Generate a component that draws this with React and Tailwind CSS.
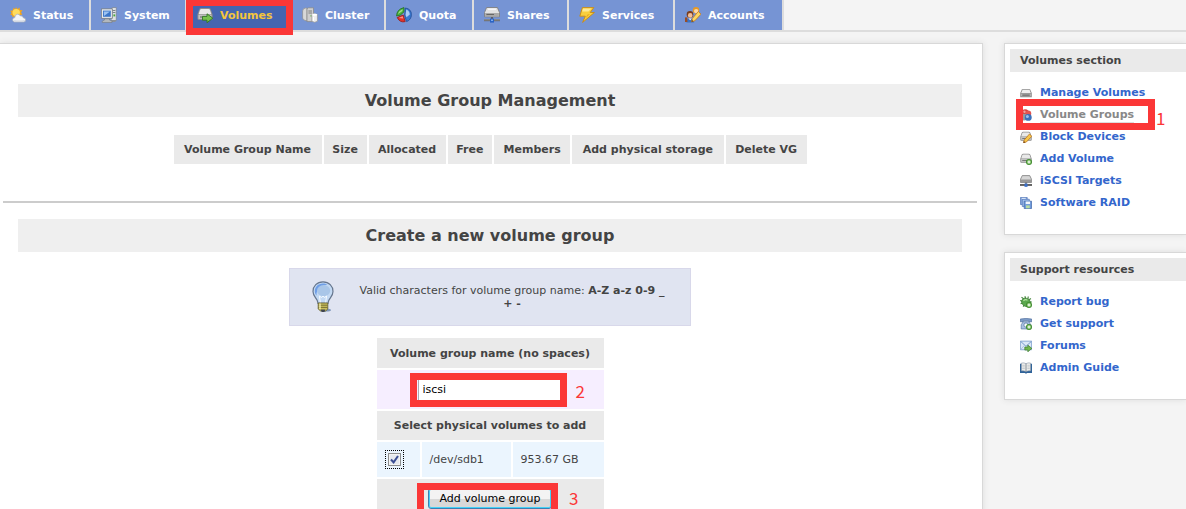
import { useState } from 'react';
import clsx from 'clsx';

const Svg = ({ size = 16, children }) => (
    <svg width={size} height={size} viewBox="0 0 16 16" className="shrink-0" aria-hidden="true">
        {children}
    </svg>
);

// Grey disk body shared by most of the volume icons
const Disk = () => (
    <>
        <path d="M2 3 Q2.3 1 4 1 H12 Q13.7 1 14 3 L15.6 7.6 V11.6 Q15.6 13 14.4 13 H1.6 Q.4 13 .4 11.6 V7.6 Z" fill="#8c8c8c" />
        <path d="M2.9 3.2 Q3.2 2 4.4 2 H11.6 Q12.8 2 13.1 3.2 L14.4 7.2 H1.6 Z" fill="#e9e9e9" />
        <path d="M1.4 8 H14.6 V11.4 Q14.6 12 14 12 H2 Q1.4 12 1.4 11.4 Z" fill="#c2c2c2" />
        <path d="M3 9.4 H10 V10.6 H3 Z" fill="#707070" />
    </>
);

const PlusBadge = () => (
    <>
        <circle cx="12" cy="12" r="4" fill="#3f8a2f" />
        <circle cx="12" cy="12" r="3" fill="#6db552" />
        <path d="M12 10 V14 M10 12 H14" stroke="#fff" strokeWidth="1.4" />
    </>
);

const StatusIcon = () => (
    <Svg>
        <path d="M6 0 L7.3 2 L9.5 .6 L9.9 3 L12.5 3.2 L11 5.4 L12.4 7.5 L2.6 10 L2 8.3 L.2 7.6 L1.6 6 L.2 3.8 L2.8 3.5 L3.2 1 L5.2 2 Z" fill="#f3a51c" />
        <circle cx="6.2" cy="5.6" r="3.7" fill="#ffdc5c" />
        <path d="M4.5 15 Q2.5 14.7 2.6 12.6 Q2.9 10.8 4.8 10.6 Q4.6 7.6 7.5 7.2 Q9.4 7 10.3 8.9 Q12.7 8.4 13.2 10.7 Q15.7 11 15.7 13 Q15.6 15 13.6 15 Z" fill="#f3f4f6" stroke="#a7b0bf" strokeWidth=".8" />
        <path d="M4.5 14.4 H14 Q15 14 15 13 Q11 14 4 13.3 Z" fill="#cdd4df" />
    </Svg>
);

const SystemIcon = () => (
    <Svg>
        <path d="M10 1.5 L11.5 .2 H15.6 V13.4 L14 15 H10 Z" fill="#8b9198" />
        <path d="M10.6 2 L11.8 1 H14.8 V13 H10.6 Z" fill="#dde1e4" />
        <path d="M11.6 3.5 H14.4 M11.6 5.5 H14.4" stroke="#7b838b" />
        <path d="M12.4 7.4 H14.2 V9.4 H12.4 Z" fill="#49a838" />
        <path d="M.4 1.8 H11.4 V11.4 H.4 Z" fill="#e8ebee" stroke="#70777f" strokeWidth=".8" />
        <path d="M2 3.6 H9.8 V9.8 H2 Z" fill="#3c76c8" />
        <path d="M2.8 4.4 H9 L3 9 Z" fill="#9bc2f2" />
        <path d="M3.5 11.8 H8.5 V13 L11 14 V15.5 H1.3 V14 L3.5 13 Z" fill="#b3b8bd" stroke="#747b82" strokeWidth=".6" />
    </Svg>
);

const VolumesIcon = () => (
    <Svg>
        <Disk />
        <path d="M5.5 9.4 H10 V6.8 L15.8 11.2 L10 15.7 V13.2 H5.5 Z" fill="#76c14d" stroke="#2f7625" strokeWidth=".9" />
    </Svg>
);

const ClusterIcon = () => (
    <Svg>
        <path d="M.6 4 Q.6 1.4 4 .8 L5 1.5 V14 L3 13.4 Q.6 12.6 .6 11 Z" fill="#d8d8d8" stroke="#8e8e8e" strokeWidth=".7" />
        <path d="M5 1.8 L6.2 .8 H11.5 V13 L10 14.6 H5 Z" fill="#cecece" stroke="#858585" strokeWidth=".7" />
        <path d="M6.4 4 H10 M6.4 6 H10" stroke="#777" strokeWidth=".9" />
        <path d="M8.4 8.2 H9.8 V9.6 H8.4 Z" fill="#62b549" />
        <path d="M9.8 7.6 Q12.6 5.6 15.4 7.6 V14.2 Q12.6 16.4 9.8 14.2 Z" fill="#eee" stroke="#969696" strokeWidth=".7" />
        <ellipse cx="12.6" cy="7.7" rx="2.6" ry="1" fill="#fff" />
        <path d="M11.5 10 V14" stroke="#fff" />
    </Svg>
);

const QuotaIcon = () => (
    <Svg>
        <path d="M8 .6 Q.6 2.4 .6 9 L4.2 8.2 L8 4.8 Z" fill="#4ab13e" stroke="#226f20" strokeWidth=".8" />
        <path d="M6.7 2.2 Q2.6 4 2 7 L6.4 3.9 Z" fill="#a4e08c" />
        <path d="M9.4 1 Q15.4 2 15.4 7.6 Q15.3 12.8 10.6 14.6 L8.6 8.6 Z" fill="#3a78d0" stroke="#1f4c95" strokeWidth=".8" />
        <path d="M10.2 2.6 Q13.6 4 13.8 7.4 L10.5 10.2 L9.6 8 Z" fill="#a9cbf4" />
        <path d="M1.2 10.6 L7.2 8 L9.2 14.6 Q4 16 1.2 10.6 Z" fill="#e0322b" stroke="#971c18" strokeWidth=".8" />
        <path d="M2.6 11 L6.6 9.3 L7.4 11.4 Z" fill="#ff9188" />
    </Svg>
);

const SharesIcon = () => (
    <Svg>
        <path d="M2.6 .5 H13.4 L15.5 5.6 V9.8 H.5 V5.6 Z" fill="#e2e2e2" stroke="#777" strokeWidth=".8" />
        <path d="M1.1 6 H14.9 V9.4 H1.1 Z" fill="#a8a8a8" />
        <path d="M4 2.2 H12" stroke="#fff" />
        <path d="M2.4 7.5 H10" stroke="#666" />
        <path d="M7.2 10 H8.8 V12 H7.2 Z" fill="#555" />
        <path d="M0 12.1 H16 V14.2 H0 Z" fill="#6b6b6b" />
        <path d="M0 12.8 H16" stroke="#a9a9a9" strokeWidth=".6" />
        <path d="M6 11.6 H10 V15.6 H6 Z" fill="#2a63c4" />
        <path d="M7 12.4 H9 V14 H7 Z" fill="#7ba9ee" />
    </Svg>
);

const ServicesIcon = () => (
    <Svg>
        <path d="M3.4 .6 H14.8 L11.2 5.5 H15.4 L3.6 15.4 L6.3 9.2 H.8 Z" fill="#f9cf3d" stroke="#c98a12" strokeWidth=".9" strokeLinejoin="round" />
        <path d="M4 1.6 H12.6 L9.4 4.6 H3.2 Z" fill="#fdea98" />
        <path d="M8.5 7.4 L11 7 L6.4 11.2 Z" fill="#e7a91f" />
    </Svg>
);

const AccountsIcon = () => (
    <Svg>
        <circle cx="11" cy="3.2" r="3.2" fill="#e99a24" />
        <circle cx="11.2" cy="4.1" r="2.2" fill="#fcd9ab" />
        <circle cx="5" cy="7.4" r="3.3" fill="#7a3d1d" />
        <circle cx="5.2" cy="8.4" r="2.3" fill="#f4be94" />
        <path d="M1.4 15.6 Q1.4 11.6 5 11.2 Q8 11.2 9.2 15.6 Z" fill="#3973c4" />
        <path d="M3.6 11.4 L5.2 13.2 L6.8 11.4 Z" fill="#fff" />
        <path d="M0 10.4 H2.4 V15 H0 Z" fill="#9a4c25" />
        <path d="M13.4 4.4 L16 7.2 L9.8 13.8 L6.6 14.8 L7.4 11.4 Z" fill="#fbd660" stroke="#c4761d" strokeWidth=".8" />
        <path d="M6.6 14.8 L7 13 L8.4 14.3 Z" fill="#5a3415" />
    </Svg>
);

const ManageIcon = () => (
    <Svg size={12}>
        <path d="M2.5 3 H13.5 L15.7 8 V13.5 H.3 V8 Z" fill="#8a8a8a" />
        <path d="M3.3 4 H12.8 L14.4 8 H1.6 Z" fill="#eee" />
        <path d="M1.5 8.8 H14.5 V12.4 H1.5 Z" fill="#b5b5b5" />
        <path d="M3 10.8 H13" stroke="#555" strokeWidth="1.3" />
    </Svg>
);

const GroupsIcon = () => (
    <Svg size={12}>
        <circle cx="7" cy="5" r="4.7" fill="#d8403c" />
        <circle cx="11" cy="6" r="4" fill="#e4544e" />
        <circle cx="5.4" cy="10.8" r="4.6" fill="#9a9a9a" />
        <circle cx="11" cy="11.2" r="4.6" fill="#3b70b9" />
        <circle cx="9.8" cy="10" r="2" fill="#9bbfe8" />
        <circle cx="6" cy="3.6" r="1.6" fill="#f3a19c" />
    </Svg>
);

const BlockIcon = () => (
    <Svg size={12}>
        <Disk />
        <path d="M12.6 4 L15.8 7 L8.4 14.8 L4.6 15.8 L5.6 12 Z" fill="#f7c64a" stroke="#b9701b" strokeWidth="1" />
        <path d="M4.6 15.8 L5.2 13.4 L7 15.2 Z" fill="#5a3415" />
    </Svg>
);

const AddVolumeIcon = () => (
    <Svg size={12}>
        <Disk />
        <PlusBadge />
    </Svg>
);

const IscsiIcon = () => (
    <Svg size={12}>
        <path d="M3 .8 H13 L15.3 5.6 V10 H.7 V5.6 Z" fill="#d6d6d6" stroke="#777" />
        <path d="M1.2 6 H14.8 V9.6 H1.2 Z" fill="#989898" />
        <path d="M0 12 H16 V14.6 H0 Z" fill="#626262" />
        <path d="M7.2 10 H8.8 V12 H7.2 Z" fill="#555" />
        <path d="M6 11.4 H10 V15.8 H6 Z" fill="#3b70c8" />
    </Svg>
);

const RaidIcon = () => (
    <Svg size={12}>
        <path d="M.6 .6 H9.6 V10 H.6 Z" fill="#86a9e0" stroke="#5579b8" />
        <path d="M3 3 H12.4 V12.6 H3 Z" fill="#a5c2ec" stroke="#5579b8" />
        <path d="M5.6 5.6 H15.4 V15.4 H5.6 Z" fill="#6f9adb" stroke="#4469aa" />
        <path d="M7.6 6 H13.4 V9.4 H7.6 Z" fill="#f2f6fc" />
        <path d="M8 11.2 H13 V15 H8 Z" fill="#b7dca0" />
        <path d="M2.4 1.2 H7.6 V2.4 H2.4 Z" fill="#e8f0fb" />
    </Svg>
);

const BugIcon = () => (
    <Svg size={12}>
        <path d="M2 1.5 L5 4 M6.5 .3 L7.5 3.4 M11 .6 L10.6 4 M14.6 3.4 L11.6 5.4 M.2 6 L3.4 7 M.8 10.4 L4 9.4 M4.2 14.2 L6 11.6 M15.8 8 H12" stroke="#4d8c45" strokeWidth="1.6" />
        <ellipse cx="8.4" cy="8.4" rx="6.4" ry="5.2" transform="rotate(35 8 8)" fill="#5aa84d" stroke="#3d7c35" />
        <path d="M4.6 6.4 Q7 4 10 5.6" stroke="#b4e3a2" strokeWidth="1.6" fill="none" />
        <PlusBadge />
    </Svg>
);

const PhoneIcon = () => (
    <Svg size={12}>
        <path d="M.4 1.4 Q8 -.4 15.6 1.4 V5 H11.8 V3.8 H4.2 V5 H.4 Z" fill="#7d9cc8" stroke="#49699b" strokeWidth=".9" />
        <path d="M4.2 5 H11.8 L14.4 9 V14.6 H1.6 V9 Z" fill="#a9c1e2" stroke="#55759f" strokeWidth=".9" />
        <circle cx="8" cy="9.4" r="2.8" fill="#fff" stroke="#55759f" />
        <PlusBadge />
    </Svg>
);

const ForumsIcon = () => (
    <Svg size={12}>
        <path d="M.5 1.5 H15.5 V13 H.5 Z" fill="#dbe8f8" stroke="#6e94c6" />
        <path d="M1 2 L8 8.4 L15 2" fill="none" stroke="#6e94c6" strokeWidth="1.2" />
        <path d="M1 12.6 L6 7 M15 12.6 L10 7" stroke="#9bb7dc" />
        <path d="M6.4 9.4 H10.4 V6.8 L15.8 11.2 L10.4 15.8 V13.4 H6.4 Z" fill="#72b84e" stroke="#38772e" strokeWidth=".9" />
    </Svg>
);

const BookIcon = () => (
    <Svg size={12}>
        <path d="M0 2.2 H16 V14.6 H9.6 L8 15.6 L6.4 14.6 H0 Z" fill="#2f6299" />
        <path d="M1.9 1.4 Q5.4 .6 8 2.2 Q10.6 .6 14.1 1.4 V11.8 Q10.6 11.2 8 12.8 Q5.4 11.2 1.9 11.8 Z" fill="#f0f0ec" stroke="#8b98a8" strokeWidth=".8" />
        <path d="M8 2.4 V13" stroke="#76828f" strokeWidth="1.2" />
        <path d="M3 4.4 H6.4 M3 6.6 H6.4 M3 8.8 H6.4 M9.8 4.4 H13 M9.8 6.6 H13 M9.8 8.8 H13" stroke="#b1b8bf" strokeWidth=".9" />
    </Svg>
);

const BulbIcon = () => (
    <svg width="22" height="32" viewBox="0 0 22 32" className="shrink-0" aria-hidden="true">
        <ellipse cx="13.5" cy="29" rx="5.5" ry="1.6" fill="#7f97bb" />
        <path d="M11 .8 C5 .8 1 5 1 10.4 C1 14.4 3.6 16.4 5 19 C5.8 20.6 5.6 21.4 6 22.4 H16 C16.4 21.4 16.2 20.6 17 19 C18.4 16.4 21 14.4 21 10.4 C21 5 17 .8 11 .8 Z" fill="#c3d9f3" stroke="#66768e" strokeWidth="1.2" />
        <path d="M11 2.4 C6 2.4 2.8 6 2.8 10 C2.8 12 3.6 13.6 4.6 14.8 C4 9.6 7 5 15.4 3.8 C14 2.8 12.6 2.4 11 2.4 Z" fill="#6f9ee6" />
        <ellipse cx="11.6" cy="9.6" rx="6.6" ry="5.6" fill="#a9c6e8" />
        <path d="M8.4 21.6 L7.4 15 L9.6 16.6 L11 15 L12.4 16.6 L14.6 15 L13.6 21.6" fill="none" stroke="#f5faff" strokeWidth="1" />
        <path d="M6.2 22 H15.8 V28 L13.6 30 H8.6 L6.2 28 Z" fill="#c9bf5c" stroke="#5f5a2c" strokeWidth=".8" />
        <path d="M6.4 24.2 H15.6 M6.4 26.4 H15.6" stroke="#6f6830" strokeWidth=".9" />
        <path d="M8 22.6 V28" stroke="#f4efae" strokeWidth="1.4" />
        <path d="M8.6 28.6 H13.4 L12.4 31 H9.8 Z" fill="#3f4450" />
    </svg>
);

const tabs = [
    { label: 'Status', icon: StatusIcon, width: 'w-[91px]' },
    { label: 'System', icon: SystemIcon, width: 'w-[96px]' },
    { label: 'Volumes', icon: VolumesIcon, width: 'w-[105px]', active: true },
    { label: 'Cluster', icon: ClusterIcon, width: 'w-[94px]' },
    { label: 'Quota', icon: QuotaIcon, width: 'w-[88px]' },
    { label: 'Shares', icon: SharesIcon, width: 'w-[95px]' },
    { label: 'Services', icon: ServicesIcon, width: 'w-[106px]' },
    { label: 'Accounts', icon: AccountsIcon, width: 'w-[109px]' },
];

const volumeLinks = [
    { label: 'Manage Volumes', icon: ManageIcon },
    { label: 'Volume Groups', icon: GroupsIcon, active: true },
    { label: 'Block Devices', icon: BlockIcon },
    { label: 'Add Volume', icon: AddVolumeIcon },
    { label: 'iSCSI Targets', icon: IscsiIcon },
    { label: 'Software RAID', icon: RaidIcon },
];

const supportLinks = [
    { label: 'Report bug', icon: BugIcon },
    { label: 'Get support', icon: PhoneIcon },
    { label: 'Forums', icon: ForumsIcon },
    { label: 'Admin Guide', icon: BookIcon },
];

const columns = ['Volume Group Name', 'Size', 'Allocated', 'Free', 'Members', 'Add physical storage', 'Delete VG'];

// Red frame drawn over the step being pointed out
const Mark = ({ className }) => (
    <span className={clsx('pointer-events-none absolute z-10 border-7 border-[#fb3737]', className)} />
);

const Step = ({ className, children }) => (
    <span className={clsx("absolute font-['Noto_Sans_CJK_SC',sans-serif] text-[17px] leading-4 font-normal text-[#fb3737]", className)}>
        {children}
    </span>
);

const NavBar = () => (
    <nav className="flex border-b-2 border-[#ddd]">
        {tabs.map(({ label, icon: Icon, width, active }) => (
            <div key={label} className={clsx('relative border-r-2 border-[#ddd]', width)}>
                <a
                    href="#"
                    className={clsx(
                        'flex h-[30px] items-center gap-[7px] pl-2.5 font-bold',
                        active ? 'bg-[#4565b0] text-[#f5c53c]' : 'bg-[#7694d4] text-white'
                    )}
                >
                    <Icon />
                    {label}
                </a>
                {active && <Mark className="top-0 -right-[3px] -bottom-[5px] -left-px border-t-6" />}
            </div>
        ))}
    </nav>
);

const Heading = ({ children }) => (
    <h2 className="mx-[15px] bg-[#efefef] text-center text-base leading-[33px] font-bold">{children}</h2>
);

const SidePanel = ({ title, links }) => (
    <section className="border border-r-0 border-[#d8d8d8] bg-white pt-[5px] pb-5 pl-[5px] shadow-[0_0_6px_#ddd]">
        <h3 className="bg-[#eaeaea] pl-2.5 text-[11px] leading-[23px] font-bold">{title}</h3>
        <ul className="pt-2.5 pl-2.5">
            {links.map(({ label, icon: Icon, active }) => (
                <li key={label} className="relative flex h-[22px] items-center gap-2">
                    <Icon />
                    <a
                        href="#"
                        className={clsx('font-bold leading-[14px]', active ? 'shadow-[0_2px_0_#ddd] text-[#888]' : 'text-[#36c]')}
                    >
                        {label}
                    </a>
                    {active && (
                        <>
                            <Mark className="-top-[5px] -left-1 h-[31px] w-[139px]" />
                            <Step className="top-1.5 left-[136px]">1</Step>
                        </>
                    )}
                </li>
            ))}
        </ul>
    </section>
);

const CreateForm = () => {
    const [name, setName] = useState('iscsi');
    const [checked, setChecked] = useState(true);

    return (
        <form onSubmit={(e) => e.preventDefault()}>
            <table className="mx-auto mt-2.5 w-[231px] border-separate border-spacing-0.5 text-center">
                <tbody>
                    <tr>
                        <th colSpan={3} className="h-[30px] bg-[#eaeaea] px-2">
                            <label htmlFor="vg-name">Volume group name (no spaces)</label>
                        </th>
                    </tr>
                    <tr>
                        <td colSpan={3} className="h-[39px] bg-[#f6eeff]">
                            <div className="relative mx-auto w-[145px]">
                                <input
                                    id="vg-name"
                                    type="text"
                                    value={name}
                                    onChange={(e) => setName(e.target.value)}
                                    className="block h-[22px] w-full border border-[#abadb3] bg-white px-1 text-black"
                                />
                                <Mark className="-inset-y-1.5 -right-1 -left-2" />
                                <Step className="top-1 left-[158px]">2</Step>
                            </div>
                        </td>
                    </tr>
                    <tr>
                        <th colSpan={3} className="h-[29px] bg-[#eaeaea] px-2">Select physical volumes to add</th>
                    </tr>
                    <tr className="text-left">
                        <td className="h-[35px] w-[43px] bg-[#ebf5fe] px-2">
                            <span className="relative flex size-[19px] items-center justify-center outline-1 outline-dotted outline-black -outline-offset-1">
                                <input
                                    id="sdb1"
                                    type="checkbox"
                                    checked={checked}
                                    onChange={(e) => setChecked(e.target.checked)}
                                    className="size-[13px] appearance-none border border-[#8e8f8f] bg-[#e6e9ee] shadow-[inset_0_0_0_1px_#f4f4f4]"
                                />
                                {checked && (
                                    <svg width="9" height="9" viewBox="0 0 9 9" className="pointer-events-none absolute" aria-hidden="true">
                                        <path d="M1 4.5 L3.6 7.4 L8 1" fill="none" stroke="#3c4f94" strokeWidth="2" />
                                    </svg>
                                )}
                            </span>
                        </td>
                        <td className="bg-[#ebf5fe] px-2">
                            <label htmlFor="sdb1">/dev/sdb1</label>
                        </td>
                        <td className="w-[91px] bg-[#ebf5fe] px-2">953.67 GB</td>
                    </tr>
                    <tr>
                        <td colSpan={3} className="h-[38px] bg-[#eaeaea]">
                            <div className="relative mx-auto w-[124px]">
                                <button
                                    type="submit"
                                    className="block h-[21px] w-full rounded-[3px] border border-[#3c7fb1] bg-linear-to-b from-[#f3f3f3] from-50% to-[#d8d8d8] to-50% text-black shadow-[inset_0_0_0_1px_#45d2f7]"
                                >
                                    Add volume group
                                </button>
                                <Mark className="-top-[5px] -right-1.5 -left-[11px] h-[35px]" />
                                <Step className="top-0.5 left-[141px]">3</Step>
                            </div>
                        </td>
                    </tr>
                </tbody>
            </table>
        </form>
    );
};

const App = () => (
    <div className="h-screen overflow-hidden bg-[#f4f4f4] font-['DejaVu_Sans',Verdana,sans-serif] text-[11px] leading-[13px] text-[#444]">
        <NavBar />
        <div className="mt-[11px] flex items-start gap-[21px]">
            <main className="min-w-0 flex-1 border border-l-0 border-[#d8d8d8] bg-white pt-10 pr-[5px] pb-10 pl-[3px] shadow-[0_0_6px_#ddd]">
                <Heading>Volume Group Management</Heading>
                <table className="mx-auto mt-4 w-[637px] border-separate border-spacing-0.5">
                    <thead>
                        <tr>
                            {columns.map((column) => (
                                <th key={column} className="bg-[#eaeaea] p-2">{column}</th>
                            ))}
                        </tr>
                    </thead>
                </table>
                <hr className="mt-[35px] mb-4 border-t-2 border-[#ccc]" />
                <Heading>Create a new volume group</Heading>
                <div className="mx-auto mt-4 flex h-[58px] w-[402px] items-center border border-[#d8d8ea] bg-[#e0e4f1] pl-[22px]">
                    <BulbIcon />
                    <p className="flex-1 px-5 text-center">
                        Valid characters for volume group name: <b>A-Z a-z 0-9 _ + -</b>
                    </p>
                </div>
                <CreateForm />
            </main>
            <aside className="w-[182px] space-y-[17px]">
                <SidePanel title="Volumes section" links={volumeLinks} />
                <SidePanel title="Support resources" links={supportLinks} />
            </aside>
        </div>
    </div>
);

export default App;
